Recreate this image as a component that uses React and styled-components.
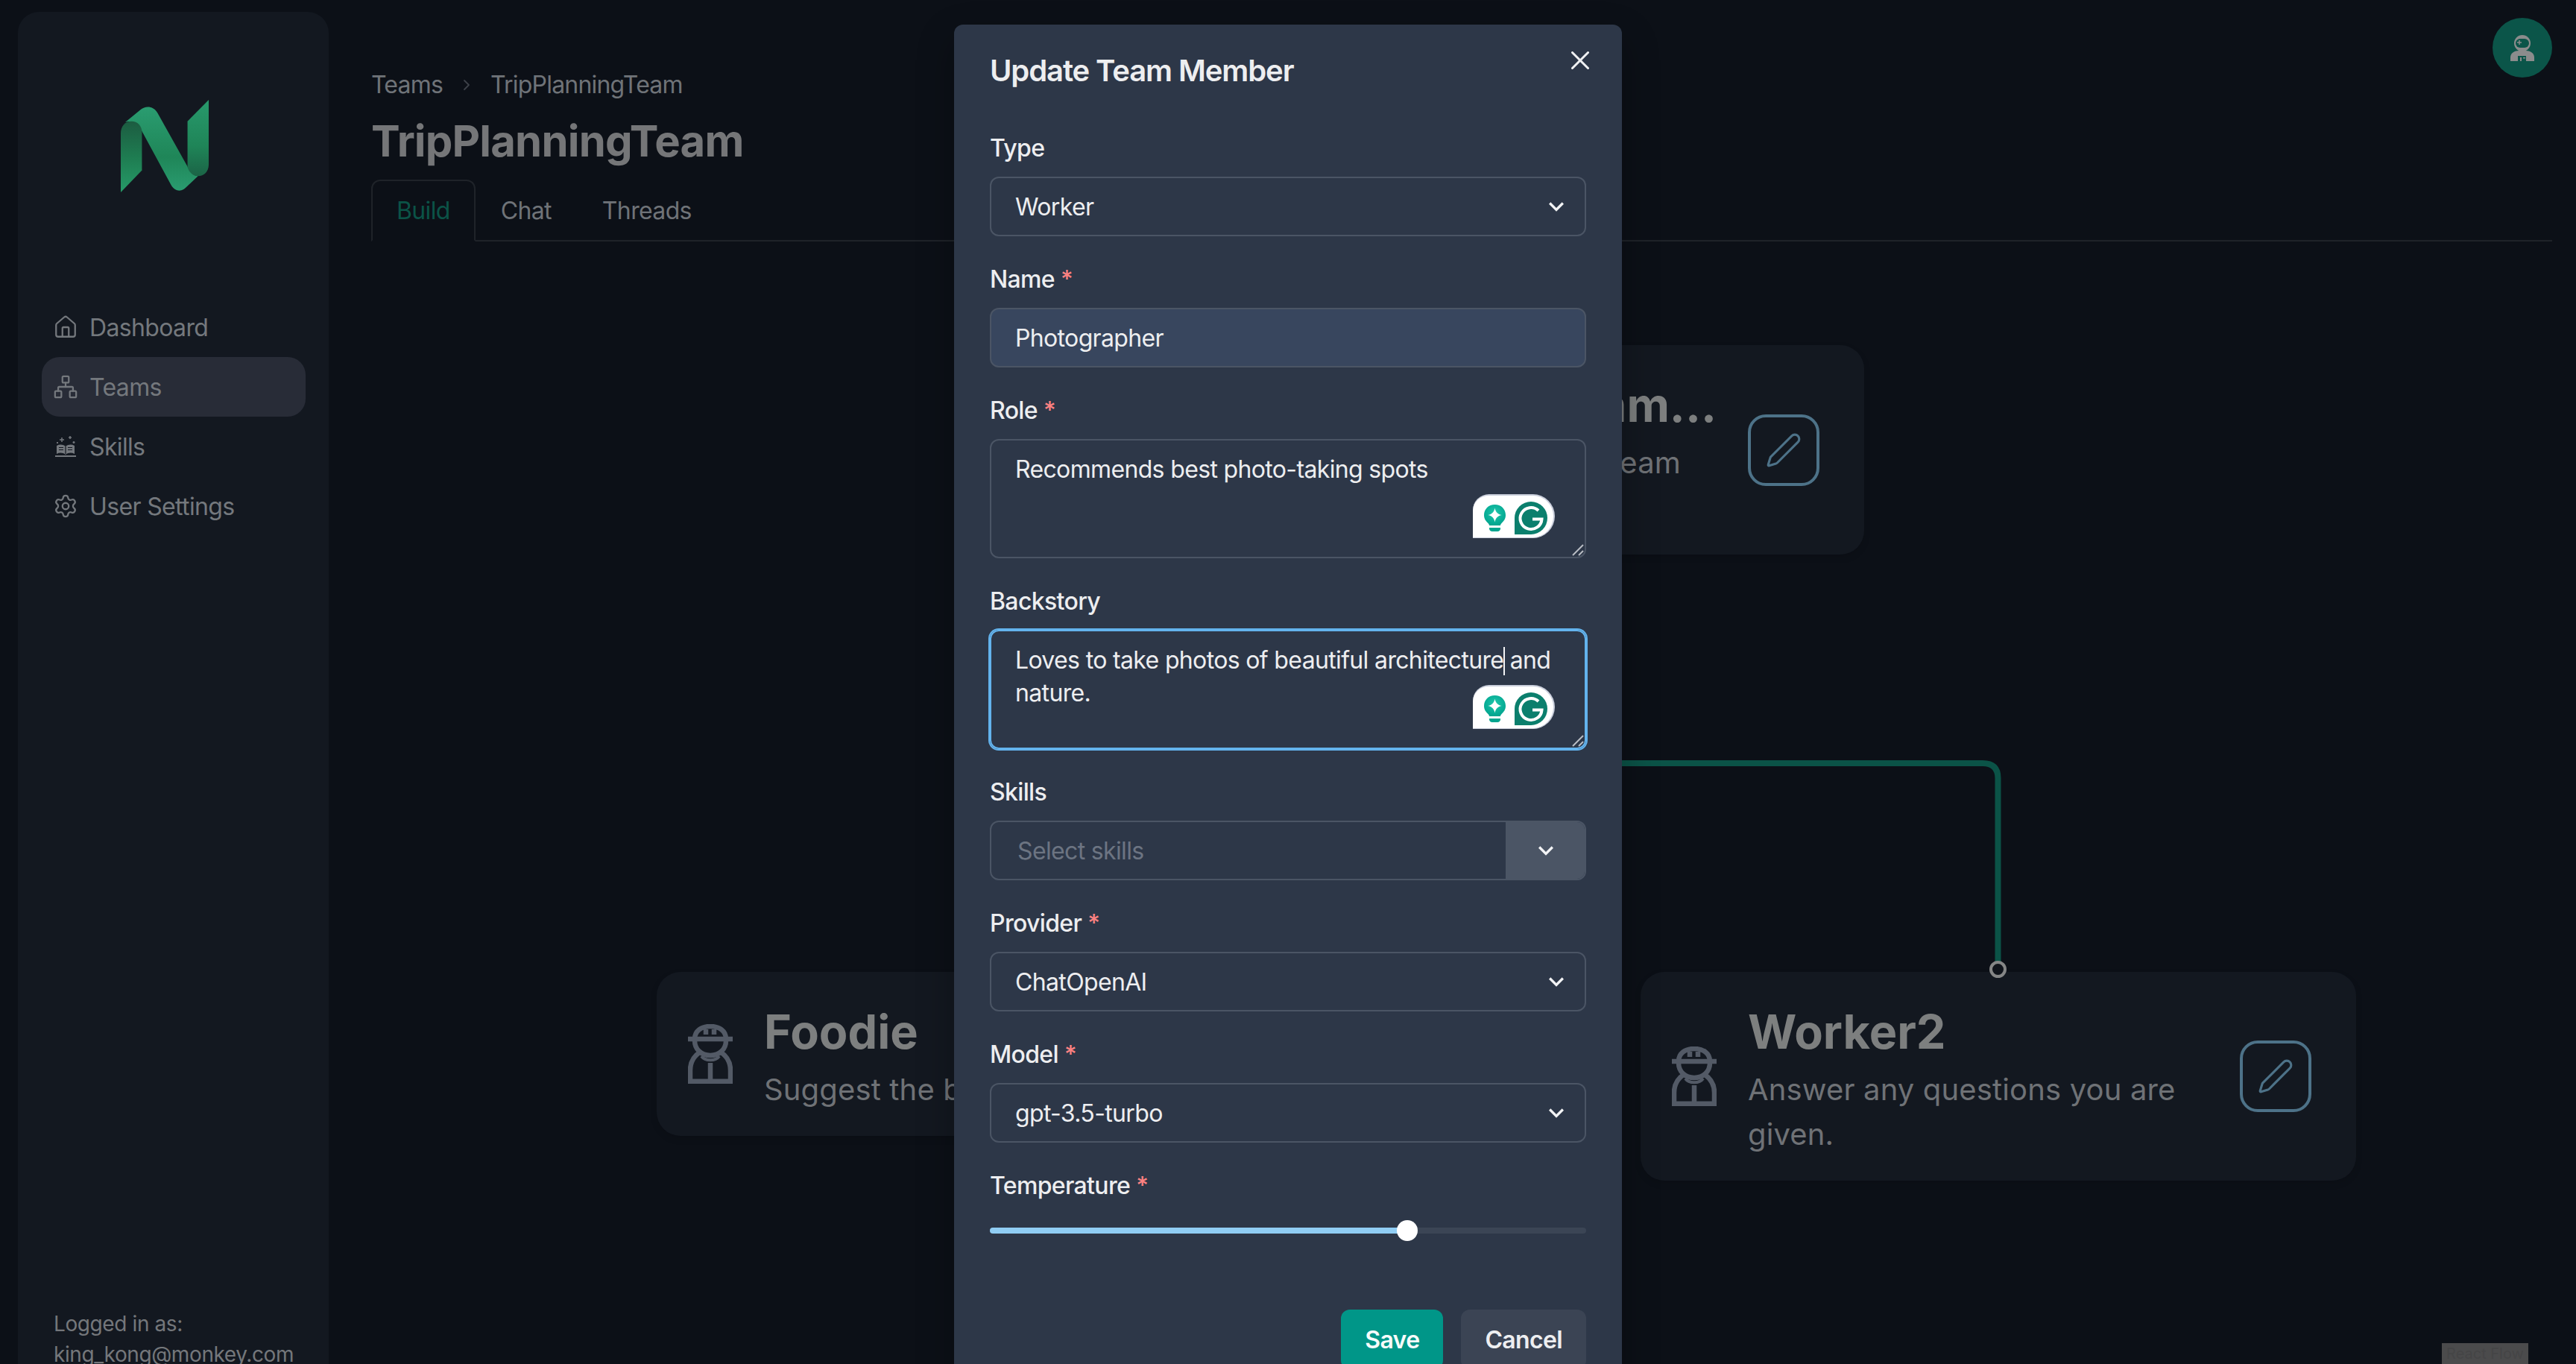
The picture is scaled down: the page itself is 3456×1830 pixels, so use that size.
import React from "react";
import styled, { createGlobalStyle } from "styled-components";
import { House, Network, Settings, Pen, ChevronRight } from "lucide-react";

const Global = createGlobalStyle`
  html, body { margin: 0; padding: 0; background: #0c1017; }
  body { font-family: Inter, "Noto Sans", sans-serif; overflow: hidden; }
  * { box-sizing: border-box; }
`;

const Page = styled.div`
  position: relative;
  width: 3456px;
  height: 1830px;
  overflow: hidden;
  display: flex;
  align-items: flex-start;
  background: #0c1017;
`;

const Sidebar = styled.aside`
  width: 417px;
  height: 1830px;
  margin: 16px 0 0 24px;
  padding: 118px 31px 8px 32px;
  flex: none;
  display: flex;
  flex-direction: column;
  background: #131820;
  border-radius: 28px 28px 0 0;
`;
const LogoWrap = styled.div`
  margin-left: 106px;
  height: 124px;
  margin-bottom: 141px;
  svg { display: block; }
`;
const Nav = styled.nav`
  display: flex;
  flex-direction: column;
`;
const NavItem = styled.div`
  height: 80px;
  display: flex;
  align-items: center;
  gap: 15px;
  padding-left: 15px;
  border-radius: 24px;
  font-size: 32px;
  letter-spacing: -0.65px;
  color: #74787d;
  background: ${(p) => (p.$active ? "#282c37" : "transparent")};
  svg { flex: none; color: #74787d; }
`;
const LoggedIn = styled.div`
  margin-top: auto;
  padding-left: 16px;
  font-size: 28px;
  line-height: 41px;
  letter-spacing: -0.4px;
  color: #74777b;
`;

const Main = styled.main`
  flex: 1;
  padding: 89px 32px 0 57px;
`;
const Crumbs = styled.div`
  display: flex;
  align-items: center;
  height: 48px;
  font-size: 32px;
  letter-spacing: -0.8px;
  color: #6f7378;
  svg { color: #3d4249; margin: 2px 20px 0 20px; }
`;
const Title = styled.h1`
  margin: 16px 0;
  font-size: 58px;
  line-height: 72px;
  font-weight: 700;
  letter-spacing: -0.8px;
  color: #757678;
`;
const Tabs = styled.div`
  display: flex;
  border-bottom: 2px solid #1f2329;
`;
const Tab = styled.div`
  height: 83px;
  margin-bottom: -2px;
  padding: 0 32px;
  display: flex;
  align-items: center;
  font-size: 32px;
  letter-spacing: -0.65px;
  color: ${(p) => (p.$active ? "#0b5347" : "#6f7378")};
  border: 2px solid ${(p) => (p.$active ? "#1f2329" : "transparent")};
  border-bottom-color: ${(p) => (p.$active ? "#0c1017" : "transparent")};
  border-radius: 12px 12px 0 0;
`;

const EdgeLayer = styled.svg`
  position: absolute;
  left: 0;
  top: 0;
`;
const Node = styled.div`
  position: absolute;
  left: ${(p) => p.$x}px;
  top: ${(p) => p.$y}px;
  width: 960px;
  height: ${(p) => p.$h}px;
  padding: 0 60px 0 42px;
  display: flex;
  align-items: center;
  background: #131820;
  border-radius: 32px;
  box-shadow: 0 4px 10px rgba(0, 0, 0, 0.12);
`;
const NodeIcon = styled.svg`
  flex: none;
  margin-right: 42px;
  color: #535a66;
`;
const NodeBody = styled.div`
  flex: 1;
  min-width: 0;
  align-self: flex-start;
  padding-top: 32px;
  padding-right: ${(p) => p.$inset || 0}px;
  text-align: ${(p) => (p.$inset ? "right" : "left")};
`;
const NodeTitle = styled.div`
  font-size: 63px;
  line-height: 96px;
  font-weight: 700;
  color: #7d7f7f;
  white-space: nowrap;
`;
const NodeRole = styled.div`
  font-size: 40px;
  line-height: 60px;
  letter-spacing: 0.15px;
  color: #6f7276;
  padding-right: ${(p) => p.$inset || 0}px;
`;
const EditButton = styled.div`
  flex: none;
  width: 96px;
  height: 96px;
  margin-left: 24px;
  display: flex;
  align-items: center;
  justify-content: center;
  border: 4px solid #4d7288;
  border-radius: 24px;
  color: #4d7288;
`;
const Handle = styled.div`
  position: absolute;
  left: 2669px;
  top: 1289px;
  width: 23px;
  height: 23px;
  border-radius: 50%;
  border: 4px solid #858686;
  background: #10141b;
`;
const Avatar = styled.div`
  position: absolute;
  left: 3344px;
  top: 24px;
  width: 80px;
  height: 80px;
  border-radius: 50%;
  background: #0b5549;
  display: flex;
  align-items: center;
  justify-content: center;
`;
const Attribution = styled.div`
  position: absolute;
  left: 3276px;
  top: 1802px;
  width: 116px;
  height: 28px;
  background: #4b4b4c;
  color: #454546;
  font-size: 20px;
  line-height: 28px;
  text-align: center;
  white-space: nowrap;
`;

const Modal = styled.section`
  position: absolute;
  left: 1280px;
  top: 33px;
  width: 896px;
  padding-bottom: 32px;
  background: #2d3748;
  border-radius: 12px;
  box-shadow: 0 20px 50px rgba(0, 0, 0, 0.3);
  color: #edeef0;
  letter-spacing: -0.65px;
`;
const ModalTitle = styled.h2`
  margin: 0;
  padding: 32px 48px;
  font-size: 40px;
  line-height: 60px;
  font-weight: 600;
  letter-spacing: -1.1px;
`;
const CloseButton = styled.svg`
  position: absolute;
  top: 36px;
  left: 828px;
  color: #f0f1f3;
`;
const Form = styled.div`
  padding: 16px 48px 0;
  display: flex;
  flex-direction: column;
  gap: 32px;
`;
const Field = styled.div`
  display: flex;
  flex-direction: column;
`;
const Label = styled.div`
  height: 48px;
  padding-top: 2px;
  font-size: 32px;
  line-height: 48px;
  font-weight: 500;
  margin-bottom: 16px;
  span {
    color: #fc8181;
    margin-left: 8px;
  }
`;
const Box = styled.div`
  position: relative;
  height: 80px;
  padding: 0 32px;
  display: flex;
  align-items: center;
  font-size: 32px;
  border: 2px solid #4b5565;
  border-radius: 12px;
  background: ${(p) => (p.$filled ? "#38465e" : "transparent")};
`;
const SelectChevron = styled.svg`
  position: absolute;
  right: 18px;
  top: 18px;
  color: #f2f3f5;
`;
const TextArea = styled.div`
  position: relative;
  height: 160px;
  padding: 17px 32px;
  font-size: 32px;
  line-height: 44px;
  border-radius: 12px;
  border: 2px solid ${(p) => (p.$focus ? "#63b3ed" : "#4b5565")};
  box-shadow: ${(p) => (p.$focus ? "0 0 0 2px #63b3ed" : "none")};
`;
const Caret = styled.span`
  position: relative;
  &::after {
    content: "";
    position: absolute;
    left: 0;
    top: 2px;
    width: 2px;
    height: 38px;
    background: #f2f3f5;
  }
`;
const Grip = styled.svg`
  position: absolute;
  right: 1px;
  bottom: 1px;
`;
const Grammarly = styled.div`
  position: absolute;
  left: 646px;
  top: 72px;
  width: 110px;
  height: 59px;
  padding: 4px 8px 0 15px;
  display: flex;
  align-items: center;
  justify-content: space-between;
  background: #fff;
  border: solid #c9cedb;
  border-width: 2px 2px 1px 0;
  border-radius: 22px 30px 30px 0;
`;
const SkillSelect = styled.div`
  height: 80px;
  display: flex;
  border: 2px solid #4b5565;
  border-radius: 12px;
  overflow: hidden;
  font-size: 32px;
`;
const Placeholder = styled.div`
  flex: 1;
  padding-left: 35px;
  display: flex;
  align-items: center;
  color: #6c7482;
`;
const Indicator = styled.div`
  width: 108px;
  margin: -2px -2px -2px 0;
  background: #4b5565;
  display: flex;
  align-items: center;
  justify-content: center;
  color: #f2f3f5;
`;
const SliderRow = styled.div`
  position: relative;
  height: 44px;
  display: flex;
  align-items: center;
`;
const Track = styled.div`
  width: 100%;
  height: 8px;
  border-radius: 4px;
  background: #3b4555;
  overflow: hidden;
`;
const Fill = styled.div`
  height: 100%;
  background: #90cdf4;
`;
const Thumb = styled.div`
  position: absolute;
  top: 8px;
  width: 28px;
  height: 28px;
  margin-left: -14px;
  border-radius: 50%;
  background: #fff;
`;
const Footer = styled.div`
  margin-top: 84px;
  padding: 0 48px;
  display: flex;
  justify-content: flex-end;
  gap: 24px;
`;
const Button = styled.div`
  height: 80px;
  padding: 0 32px;
  display: flex;
  align-items: center;
  border-radius: 12px;
  font-size: 32px;
  font-weight: 600;
  color: ${(p) => (p.$primary ? "#f6fbfa" : "#edeef0")};
  background: ${(p) => (p.$primary ? "#009688" : "#3b4454")};
`;

const Logo = () => (
  <svg width="118" height="124" viewBox="187 102 353 371">
    <defs>
      <linearGradient id="lgDiag" x1="0" y1="0" x2="0" y2="1">
        <stop offset="0" stopColor="#2a9c70" />
        <stop offset="0.6" stopColor="#1f8658" />
        <stop offset="1" stopColor="#2a9c70" />
      </linearGradient>
      <linearGradient id="lgLeft" x1="0" y1="0" x2="0" y2="1">
        <stop offset="0" stopColor="#1c5c41" />
        <stop offset="0.5" stopColor="#1e7c51" />
        <stop offset="1" stopColor="#269a68" />
      </linearGradient>
      <linearGradient id="lgRight" x1="0" y1="0" x2="0" y2="1">
        <stop offset="0" stopColor="#28996c" />
        <stop offset="0.6" stopColor="#1f8558" />
        <stop offset="1" stopColor="#1b6446" />
      </linearGradient>
    </defs>
    <path fill="url(#lgDiag)" d="M205 192 L268 140 C285 126 318 124 335 155 L455 370 C465 392 480 408 497 408 L447 455 C425 475 402 465 390 445 L272 228 C262 200 235 180 205 192 Z" />
    <path fill="url(#lgLeft)" d="M187 473 V235 C187 208 205 188 230 188 C254 188 272 206 272 232 V385 Z" />
    <path fill="url(#lgRight)" d="M540 102 L455 188 V372 C462 395 478 408 497 408 C520 408 540 390 540 362 Z" />
  </svg>
);

const SkillsIcon = () => (
  <svg width="34" height="34" viewBox="-2 -2 34 34" fill="none" stroke="currentColor">
    <path d="M3 14 C7 12 11 12 15 15 C19 12 23 12 27 14 V25 C23 23 19 23 15 26 C11 23 7 23 3 25 Z" fill="currentColor" stroke="none" />
    <path d="M15 15 V25" stroke="#131820" strokeWidth="1.2" />
    <path d="M6 16.5 H12 M6 19.5 H12 M18 16.5 H24 M18 19.5 H24" stroke="#131820" strokeWidth="1" />
    <path d="M1 28 H29" strokeWidth="2" />
    <path d="M10 3 V9 M7 6 H13 M21 1 V5 M19 3 H23 M26 8 V11 M24.5 9.5 H27.5 M4 9 V11 M3 10 H5" strokeWidth="1.5" />
  </svg>
);

const WorkerIcon = () => (
  <NodeIcon width="60" height="80" viewBox="0 0 60 80" fill="none" stroke="currentColor" strokeWidth="6.5">
    <path d="M0 20 H60" />
    <path d="M9 20 C9 9 18 3 30 3 C42 3 51 9 51 20" />
    <path d="M9 22 C9 34 18 42 30 42 C42 42 51 34 51 22" />
    <path d="M24 7 V14 M35 7 V14" />
    <path d="M3 77 V62 C3 50 9 42 17 37 M57 77 V62 C57 50 51 42 43 37" />
    <path d="M0 76.7 H60" />
    <path d="M30 52 V77" />
    <path d="M18 43 C23 50 37 50 42 43" strokeWidth="4" />
  </NodeIcon>
);

const Astronaut = () => (
  <svg width="32" height="36" viewBox="0 0 32 36">
    <circle cx="16" cy="12" r="11" fill="#8b8c8c" />
    <rect x="7" y="6" width="18" height="12" rx="6" fill="#0b5549" />
    <path d="M12 8 V14 M9 11 H15" stroke="#8b8c8c" strokeWidth="1.5" />
    <path d="M0 36 V31 C0 25 6 22 11 22 H21 C26 22 32 25 32 31 V36 Z" fill="#8b8c8c" />
    <rect x="10" y="29" width="11" height="7" fill="#0b5549" />
    <rect x="13" y="31" width="2" height="5" fill="#8b8c8c" />
    <rect x="17" y="31" width="3" height="1.5" fill="#8b8c8c" />
  </svg>
);

const Chevron = ({ as: Comp = "svg", ...rest }) => (
  <Comp width="40" height="40" viewBox="0 0 24 24" fill="currentColor" {...rest}>
    <path d="M16.59 8.59L12 13.17 7.41 8.59 6 10l6 6 6-6z" />
  </Comp>
);

const GrammarlyBadge = () => (
  <Grammarly>
    <svg width="29" height="36" viewBox="0 0 29 36">
      <defs>
        <radialGradient id="bulb" cx="0.5" cy="0.4" r="0.6">
          <stop offset="0" stopColor="#1fc7ac" />
          <stop offset="1" stopColor="#00a48e" />
        </radialGradient>
      </defs>
      <path fill="url(#bulb)" d="M14.5 0 C23 0 29 6.2 29 14 C29 19.5 26 22.5 23.5 25 C22.6 26 22 27 22 28 H7 C7 27 6.4 26 5.5 25 C3 22.5 0 19.5 0 14 C0 6.2 6 0 14.5 0 Z" />
      <path fill="#00a48e" d="M7 31 H22 V32 C22 34.5 20 36 18 36 H11 C9 36 7 34.5 7 32 Z" />
      <path fill="#fff" d="M14.5 4.5 C15.5 10 18 12.5 23.5 14 C18 15.5 15.5 18 14.5 23.5 C13.5 18 11 15.5 5.5 14 C11 12.5 13.5 10 14.5 4.5 Z" />
    </svg>
    <svg width="44" height="44" viewBox="0 0 44 44">
      <path fill="#0b7f6d" d="M22 0 A22 22 0 0 1 22 44 H0 V22 A22 22 0 0 1 22 0 Z" />
      <path d="M32 12 A14.5 14.5 0 1 0 36.5 23.5 H24" fill="none" stroke="#fff" strokeWidth="4" />
    </svg>
  </Grammarly>
);

const ResizeGrip = () => (
  <Grip width="16" height="16" viewBox="0 0 16 16" stroke="#b8bcc4" strokeWidth="2">
    <path d="M1 15 L15 1 M9 15 L15 9" />
  </Grip>
);

const Required = () => <span>*</span>;

export default function App() {
  return (
    <Page>
      <Global />
      <Sidebar>
        <LogoWrap><Logo /></LogoWrap>
        <Nav>
          <NavItem><House size={34} strokeWidth={1.6} />Dashboard</NavItem>
          <NavItem $active><Network size={34} strokeWidth={1.6} />Teams</NavItem>
          <NavItem><SkillsIcon />Skills</NavItem>
          <NavItem><Settings size={34} strokeWidth={1.6} />User Settings</NavItem>
        </Nav>
        <LoggedIn>Logged in as:<br />king_kong@monkey.com</LoggedIn>
      </Sidebar>
      <Main>
        <Crumbs>Teams<ChevronRight size={24} strokeWidth={1.8} />TripPlanningTeam</Crumbs>
        <Title>TripPlanningTeam</Title>
        <Tabs>
          <Tab $active>Build</Tab>
          <Tab>Chat</Tab>
          <Tab>Threads</Tab>
        </Tabs>
      </Main>

      <EdgeLayer width="3456" height="1830" fill="none" stroke="#0b5347" strokeWidth="8">
        <path d="M1900 1024 H2660 Q2680.5 1024 2680.5 1044 V1292" />
      </EdgeLayer>
      <Node $x={1541} $y={463} $h={281}>
        <WorkerIcon />
        <NodeBody $inset={18}>
          <NodeTitle>Team...</NodeTitle>
          <NodeRole $inset={48}>Leads the team</NodeRole>
        </NodeBody>
        <EditButton><Pen size={50} strokeWidth={1.5} /></EditButton>
      </Node>
      <Node $x={881} $y={1304} $h={220}>
        <WorkerIcon />
        <NodeBody>
          <NodeTitle>Foodie</NodeTitle>
          <NodeRole>Suggest the best restaurants</NodeRole>
        </NodeBody>
      </Node>
      <Node $x={2201} $y={1304} $h={280}>
        <WorkerIcon />
        <NodeBody>
          <NodeTitle>Worker2</NodeTitle>
          <NodeRole>Answer any questions you are given.</NodeRole>
        </NodeBody>
        <EditButton><Pen size={50} strokeWidth={1.5} /></EditButton>
      </Node>
      <Handle />
      <Avatar><Astronaut /></Avatar>
      <Attribution>React Flow</Attribution>

      <Modal>
        <ModalTitle>Update Team Member</ModalTitle>
        <CloseButton width="24" height="24" viewBox="0 0 24 24" fill="currentColor">
          <path d="M.439,21.44a1.5,1.5,0,0,0,2.122,2.121L11.823,14.3a.25.25,0,0,1,.354,0l9.262,9.263a1.5,1.5,0,1,0,2.122-2.121L14.3,12.177a.25.25,0,0,1,0-.354l9.263-9.262A1.5,1.5,0,0,0,21.439.44L12.177,9.7a.25.25,0,0,1-.354,0L2.561.44A1.5,1.5,0,0,0,.439,2.561L9.7,11.823a.25.25,0,0,1,0,.354Z" />
        </CloseButton>
        <Form>
          <Field>
            <Label>Type</Label>
            <Box>Worker<Chevron as={SelectChevron} /></Box>
          </Field>
          <Field>
            <Label>Name<Required /></Label>
            <Box $filled>Photographer</Box>
          </Field>
          <Field>
            <Label>Role<Required /></Label>
            <TextArea>
              Recommends best photo-taking spots
              <GrammarlyBadge />
              <ResizeGrip />
            </TextArea>
          </Field>
          <Field>
            <Label>Backstory</Label>
            <TextArea $focus>
              Loves to take photos of beautiful architecture<Caret /> and nature.
              <GrammarlyBadge />
              <ResizeGrip />
            </TextArea>
          </Field>
          <Field>
            <Label>Skills</Label>
            <SkillSelect>
              <Placeholder>Select skills</Placeholder>
              <Indicator><Chevron /></Indicator>
            </SkillSelect>
          </Field>
          <Field>
            <Label>Provider<Required /></Label>
            <Box>ChatOpenAI<Chevron as={SelectChevron} /></Box>
          </Field>
          <Field>
            <Label>Model<Required /></Label>
            <Box>gpt-3.5-turbo<Chevron as={SelectChevron} /></Box>
          </Field>
          <Field>
            <Label>Temperature<Required /></Label>
            <SliderRow>
              <Track><Fill style={{ width: "70%" }} /></Track>
              <Thumb style={{ left: "70%" }} />
            </SliderRow>
          </Field>
        </Form>
        <Footer>
          <Button $primary>Save</Button>
          <Button>Cancel</Button>
        </Footer>
      </Modal>
    </Page>
  );
}
